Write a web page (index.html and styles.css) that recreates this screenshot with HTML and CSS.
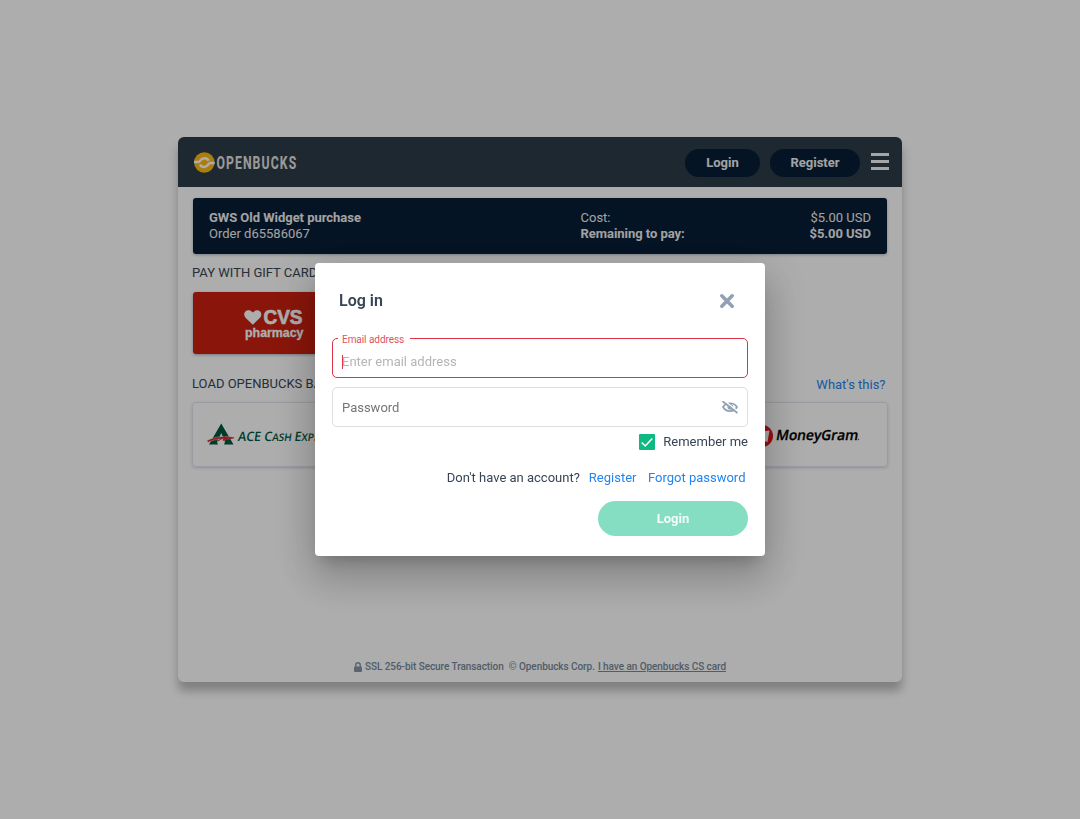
FILE: index.html
```html
<!DOCTYPE html>
<html lang="en">
<head>
<meta charset="utf-8">
<title>Openbucks</title>
<link rel="stylesheet" href="styles.css">
</head>
<body>
<main class="widget">
  <header class="topbar">
    <svg class="logo" width="106" height="24" viewBox="0 0 106 24">
      <circle cx="11.3" cy="11.500" r="10.300" fill="#fdb913"/>
      <path d="M1 11H5.500C7.200 11 7.400 7.300 11.300 7.300C13.600 7.300 15 8.400 15.600 9.800" fill="none" stroke="#fff" stroke-width="2.500"/>
      <path d="M21.600 12H17C15.400 12 15.200 15.900 11.300 15.900C9 15.900 7.600 14.800 7 13.400" fill="none" stroke="#fff" stroke-width="2.500"/>
      <text class="logo-text" transform="translate(23.400 18) scale(.66 1)">OPENBUCKS</text>
    </svg>
    <nav class="nav">
      <button class="pill pill-login">Login</button>
      <button class="pill pill-register">Register</button>
      <span class="burger"><i></i><i></i><i></i></span>
    </nav>
  </header>
  <section class="order">
    <div class="order-name"><b>GWS Old Widget purchase</b><span>Order d65586067</span></div>
    <div class="order-cost">
      <div><span>Cost:</span><span>$5.00 USD</span></div>
      <div class="remaining"><span>Remaining to pay:</span><span>$5.00 USD</span></div>
    </div>
  </section>
  <h2 class="heading heading-gift">PAY WITH GIFT CARDS</h2>
  <div class="gift-card">
    <svg width="64" height="40" viewBox="0 0 64 40">
      <path d="M9.800 18.700L2.800 12C-1.800 7 4.500 1 9.800 6.500C15 1 21.300 7 16.800 12Z" fill="#fff"/>
      <text class="cvs" x="20.500" y="18.300" textLength="39" lengthAdjust="spacingAndGlyphs">CVS</text>
      <text class="pharmacy" x="2" y="30.500" textLength="58.500" lengthAdjust="spacingAndGlyphs">pharmacy</text>
    </svg>
  </div>
  <div class="load-row">
    <h2 class="heading">LOAD OPENBUCKS BALANCE</h2>
    <a class="link">What's this?</a>
  </div>
  <div class="partners">
    <div class="partner">
      <svg width="140" height="26" viewBox="0 0 140 26">
        <path d="M2 22.500L14.200 1.500L26.500 22.500H17L18 20L14.300 11L10 20L11 22.500Z" fill="#00573f"/>
        <path d="M0 18.500C8 14.500 17 13.700 28 15.200L15.500 18.700L17 16.800C10 17 5 18.500 1 20.500Z" fill="#d8292f" stroke="#fff" stroke-width=".4"/>
        <path d="M11 19L18 14.500L16 18.200L27 15.800" fill="none" stroke="#d8292f"/>
        <text class="ace" transform="translate(30.500 18.800) skewX(-8)" textLength="99" lengthAdjust="spacingAndGlyphs"><tspan class="cap">ACE C</tspan>ASH <tspan class="cap">E</tspan>XPRESS</text>
      </svg>
    </div>
    <div class="partner partner-right">
      <svg width="112" height="26" viewBox="0 0 112 26">
        <circle cx="12" cy="14" r="11" fill="#e7131a"/>
        <path d="M7 10L19.500 8.500L17.500 20L14 19L13.500 12L10 18Z" fill="#fff"/>
        <text class="moneygram" transform="translate(25.500 18) skewX(-10)" textLength="82" lengthAdjust="spacingAndGlyphs">MoneyGram</text>
        <circle cx="108.500" cy="17.500" r=".7" fill="#555"/>
      </svg>
    </div>
  </div>
  <footer class="footer">
    <svg width="8" height="10" viewBox="0 0 8 10"><path d="M1.800 5V3A2.200 2.200 0 0 1 6.200 3V5" fill="none" stroke="#8796a8" stroke-width="1.400"/><rect y="4.400" width="8" height="5.600" rx="1" fill="#8796a8"/></svg>
    <span class="ssl">SSL 256-bit Secure Transaction</span>
    <span class="corp">© Openbucks Corp.</span>
    <u>I have an Openbucks CS card</u>
  </footer>
</main>
<div class="overlay">
  <form class="dialog">
    <div class="dialog-head">
      <h1>Log in</h1>
      <svg width="16" height="16" viewBox="0 0 16 16"><path d="M2.800 2.800L13.200 13.200M13.200 2.800L2.800 13.200" stroke="#91a1b4" stroke-width="3.600" stroke-linecap="round"/></svg>
    </div>
    <div class="field field-error">
      <span class="field-label">Email address</span>
      <span class="caret"></span><span class="placeholder">Enter email address</span>
    </div>
    <div class="field field-password">
      <span>Password</span>
      <svg width="16" height="14" viewBox="0 0 16 14">
        <path d="M1 6C4.200 1 11.800 1 15 6C11.800 11.500 4.200 11.500 1 6Z" fill="none" stroke="#91a1b4" stroke-width="1.700"/>
        <circle cx="8.300" cy="5.800" r="2.900" fill="#91a1b4"/>
        <path d="M1.200 -1L16 10.500" stroke="#fff" stroke-width="1.400"/>
        <path d="M.5 .2L15.500 12" stroke="#91a1b4" stroke-width="1.700"/>
      </svg>
    </div>
    <div class="remember">
      <svg width="16" height="16" viewBox="0 0 16 16"><rect width="16" height="16" rx="1" fill="#10b981"/><path d="M2.700 8.500L6.200 12L13.300 4.500" fill="none" stroke="#fff" stroke-width="1.500"/></svg>
      <span>Remember me</span>
    </div>
    <div class="account"><span>Don't have an account?</span><a class="link">Register</a><a class="link">Forgot password</a></div>
    <button class="submit" type="button">Login</button>
  </form>
</div>
</body>
</html>
```

FILE: styles.css
```css
* { box-sizing: border-box; }
body { margin: 0; height: 819px; display: flex; align-items: center; justify-content: center; overflow: hidden; background: #fff; color: #384555; font: 13px/16px Roboto, sans-serif; }
button { border: 0; padding: 0; font: bold 13px/16px Roboto, sans-serif; color: #fff; }
h1, h2 { margin: 0; }
.widget { width: 724px; height: 545px; display: flex; flex-direction: column; border-radius: 6px; background: #fff; box-shadow: 0 9px 10px rgba(0,0,0,.26); }
.topbar { height: 50px; flex: none; display: flex; align-items: center; justify-content: space-between; padding: 1px 13px 0 15px; border-radius: 6px 6px 0 0; background: #2d3b47; }
.logo { overflow: visible; }
.logo-text { font: bold 18.500px Roboto, sans-serif; letter-spacing: 1.700px; fill: #e4e4e4; }
.nav { display: flex; align-items: center; gap: 10px; padding-top: 1px; }
.pill { height: 28px; border-radius: 14px; background: #071e36; color: #f0f0f0; }
.pill-login { width: 75px; }
.pill-register { width: 90px; }
.burger { width: 18px; height: 17px; margin: 0 0 3px 1px; display: flex; flex-direction: column; justify-content: space-between; }
.burger i { height: 3px; background: #f4f4f4; }
.order { height: 56px; flex: none; margin: 11px 15px 0; padding: 12px 16px; display: flex; justify-content: space-between; border-radius: 3px; background: #071e36; color: #f0f0f0; box-shadow: 0 1px 3px rgba(40,65,95,.35); }
.order-name { display: flex; flex-direction: column; }
.order-name b { letter-spacing: -.03px; }
.order-cost { width: 290.500px; }
.order-cost div { display: flex; justify-content: space-between; }
.remaining { font-weight: bold; letter-spacing: -.04px; }
.heading { font: 13px/16px Roboto, sans-serif; white-space: nowrap; }
.heading-gift { margin: 11px 14px 11px; }
.gift-card { width: 165px; height: 62px; flex: none; margin-left: 15px; padding: 14px 0 0 50px; border-radius: 3px; background: #cc2010; box-shadow: 0 1px 3px rgba(40,65,95,.4); }
.cvs { font: bold 20px "Liberation Sans", sans-serif; fill: #fff; stroke: #fff; stroke-width: .7px; }
.pharmacy { font: bold 12.500px "Liberation Sans", sans-serif; fill: #fff; stroke: #fff; stroke-width: .3px; }
.load-row { display: flex; justify-content: space-between; align-items: center; margin: 22px 16.500px 10px 14px; }
.load-row .link { position: relative; top: 1px; }
.link { color: #2384ee; }
.partners { display: flex; justify-content: space-between; padding: 0 14px; }
.partner { width: 165px; height: 65px; padding: 19px 0 0 14px; border: 1px solid #e2e7ed; border-radius: 4px; box-shadow: 0 1px 3px rgba(40,65,95,.22); overflow: hidden; }
.partner-right { padding-left: 26px; }
.ace { font: 600 10.500px "Open Sans", sans-serif; fill: #00573f; }
.cap { font-size: 13px; }
.moneygram { font: 600 14px "Open Sans", sans-serif; fill: #000; stroke: #000; stroke-width: .3px; }
.footer { margin-top: auto; padding-bottom: 9px; display: flex; justify-content: center; align-items: center; color: #78889b; font: 500 10px/13px Roboto, sans-serif; letter-spacing: -.06px; }
.ssl { margin: 0 5px 0 3px; }
.corp { margin-right: 3px; }
.overlay { position: fixed; inset: 0; display: flex; align-items: center; justify-content: center; background: rgba(0,0,0,.32); }
.dialog { width: 450px; height: 293px; padding: 0 17px; display: flex; flex-direction: column; border-radius: 4px; background: #fff; box-shadow: 0 11px 15px -7px rgba(0,0,0,.2), 0 24px 38px 3px rgba(0,0,0,.14), 0 9px 46px 8px rgba(0,0,0,.12); }
.dialog-head { height: 75px; flex: none; padding: 0 13px 0 7px; display: flex; align-items: center; justify-content: space-between; }
.dialog-head h1 { font: 600 16px/20px Roboto, sans-serif; }
.field { position: relative; height: 40px; flex: none; padding: 7px 9px 0; display: flex; align-items: center; border: 1px solid #dedede; border-radius: 5px; color: #757575; }
.field-error { border-color: #dc3545; }
.field-label { position: absolute; top: -6px; left: 5px; width: 72px; padding-left: 4px; background: #fff; color: #e05260; font-size: 10px; line-height: 14px; letter-spacing: -.05px; }
.caret { width: 1px; height: 14px; background: #dc3545; }
.placeholder { margin-left: -1px; color: #b5b5b5; }
.field-password { margin-top: 9px; padding-top: 1px; justify-content: space-between; }
.remember { height: 16px; flex: none; margin-top: 7px; display: flex; justify-content: flex-end; gap: 8px; }
.account { margin: 20px 2.500px 15px 0; display: flex; justify-content: flex-end; }
.account .link { margin-left: 9px; }
.account .link + .link { margin-left: 11.500px; }
.submit { width: 150px; height: 35px; flex: none; align-self: flex-end; border-radius: 18px; background: #85dec2; color: #f3fcf9; }
```
